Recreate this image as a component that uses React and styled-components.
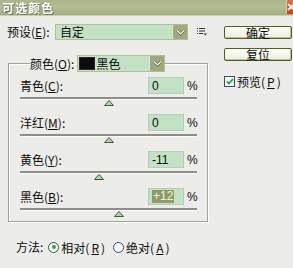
import React from "react";
import styled, { createGlobalStyle } from "styled-components";

const GlobalStyle = createGlobalStyle`
  html, body {
    margin: 0;
    padding: 0;
    background: #ecece8;
  }
  body {
    font-family: "Noto Sans CJK SC", "Liberation Sans", sans-serif;
    font-size: 12px;
    color: #0c0c0c;
  }
`;

const Window = styled.div`
  width: 293px;
  height: 268px;
  overflow: hidden;
  background: #ecece8;
  display: flex;
  flex-direction: column;
`;

const TitleBar = styled.div`
  flex: none;
  height: 15px;
  display: flex;
  align-items: center;
  justify-content: space-between;
  padding-left: 2px;
  background: linear-gradient(#aab68a, #b3be94 45%, #a2ae80);
  border-bottom: 1px solid #c9d0b4;
`;

const Title = styled.div`
  color: #fff;
  font-weight: bold;
  font-size: 12px;
  line-height: 14px;
  letter-spacing: 1px;
  text-shadow: 1px 1px 0 #6d7650, -1px 0 0 #8a9468;
`;

const CloseBox = styled.div`
  width: 6px;
  height: 14px;
  margin-top: -1px;
  background: linear-gradient(#e4714c, #c8431f);
  border-left: 1px solid #f3c0a8;
  border-top-left-radius: 2px;
  overflow: hidden;
  svg {
    display: block;
  }
`;

const Main = styled.div`
  display: flex;
  padding-top: 8px;
`;

const LeftCol = styled.div`
  width: 216px;
  flex: none;
`;

const RightCol = styled.div`
  display: flex;
  flex-direction: column;
  padding: 2px 0 0 8px;
`;

const PresetRow = styled.div`
  display: flex;
  align-items: center;
  height: 16px;
  padding-left: 7px;
`;

const FieldLabel = styled.span`
  width: ${(p) => p.$w || "auto"};
  flex: ${(p) => (p.$grow ? 1 : "none")};
  line-height: 14px;
  white-space: nowrap;
`;

const Select = styled.div`
  box-sizing: border-box;
  width: ${(p) => p.$w}px;
  height: ${(p) => p.$h}px;
  display: flex;
  align-items: center;
  background: #c3e2c5;
  border: 1px solid #b4bd94;
`;

const SelectText = styled.span`
  flex: 1;
  display: flex;
  align-items: center;
  gap: 1px;
  padding-left: ${(p) => p.$pad || 4}px;
  line-height: 14px;
  white-space: nowrap;
`;

const Swatch = styled.span`
  width: 14px;
  height: 11px;
  background: #0c0c0c;
  border: 1px solid #2a2a2a;
`;

const DropButton = styled.span`
  width: 14px;
  height: 100%;
  flex: none;
  display: flex;
  align-items: center;
  justify-content: center;
  background: #9fa87e;
  border-left: 1px solid #dfe5cf;
`;

const ListIcon = styled.svg`
  margin-left: 9px;
  flex: none;
`;

const Group = styled.fieldset`
  box-sizing: border-box;
  width: 200px;
  margin: 15px 0 0 8px;
  padding: 5px 10px 6px 11px;
  border: 1px solid #a2a29a;
  box-shadow: 1px 1px 0 #fff, inset 1px 1px 0 #fff;
  min-inline-size: 0;
`;

const Legend = styled.legend`
  margin-left: 10px;
  padding: 0;
`;

const LegendInner = styled.div`
  display: flex;
  align-items: center;
  gap: 3px;
`;

const Rows = styled.div`
  display: grid;
  row-gap: 10px;
`;

const SliderRow = styled.div`
  height: 27px;
`;

const InputLine = styled.div`
  display: flex;
  align-items: center;
  height: 17px;
`;

const NumberBox = styled.div`
  box-sizing: border-box;
  width: 36px;
  height: 17px;
  display: flex;
  align-items: center;
  padding-left: 3px;
  background: #c3e2c5;
  border: 1px solid #b2cfb3;
  font-family: "Liberation Sans", sans-serif;
  font-size: 12px;
`;

const Selected = styled.span`
  background: #8e9b62;
  color: #f4f4e8;
  line-height: 13px;
  padding: 0 1px;
`;

const Percent = styled.span`
  width: 10px;
  margin-left: 3px;
  font-family: "Liberation Sans", sans-serif;
  font-size: 12px;
`;

const Track = styled.div`
  position: relative;
  margin-top: 3px;
  height: 2px;
  background: #8e8e88;
  border-bottom: 1px solid #fbfbf8;
`;

const Thumb = styled.svg`
  position: absolute;
  top: 3px;
  margin-left: -5px;
`;

const MethodRow = styled.div`
  display: flex;
  align-items: center;
  height: 16px;
  margin-top: 17px;
  padding-left: 16px;
  gap: 5px;
`;

const RadioLabel = styled.label`
  display: flex;
  align-items: center;
  gap: 2px;
  margin-right: 3px;
  white-space: nowrap;
`;

const RadioDot = styled.span`
  box-sizing: border-box;
  width: 11px;
  height: 11px;
  border-radius: 50%;
  border: 1px solid #27507e;
  background: #fbfbf6;
  display: flex;
  align-items: center;
  justify-content: center;
  &::after {
    content: "";
    width: 4px;
    height: 4px;
    border-radius: 50%;
    background: ${(p) => (p.$on ? "#3aa53a" : "transparent")};
  }
`;

const Button = styled.div`
  box-sizing: border-box;
  width: 68px;
  height: 13px;
  margin-bottom: 9px;
  display: flex;
  align-items: center;
  justify-content: center;
  border: 1px solid #4f5f25;
  border-radius: 2px;
  background: linear-gradient(#fdfdf7, #efeee2);
  box-shadow: inset -1px -1px 0 #b8c39a;
  line-height: 12px;
  font-size: 12px;
`;

const CheckRow = styled.label`
  display: flex;
  align-items: center;
  gap: 2px;
  margin-top: 3px;
  white-space: nowrap;
`;

const CheckBox = styled.span`
  box-sizing: border-box;
  width: 11px;
  height: 11px;
  border: 1px solid #27507e;
  background: #fbfbf6;
  display: flex;
  align-items: center;
  justify-content: center;
`;

const Chevron = () => (
  <svg width="9" height="7" viewBox="0 0 9 7">
    <path d="M1 1.5 L4.5 5 L8 1.5" fill="none" stroke="#4e5634" strokeWidth="2.4" />
    <path d="M1 1.5 L4.5 5 L8 1.5" fill="none" stroke="#fff" strokeWidth="1.2" />
  </svg>
);

const sliders = [
  { label: "青色", key: "C", value: 0 },
  { label: "洋红", key: "M", value: 0 },
  { label: "黄色", key: "Y", value: -11 },
  { label: "黑色", key: "B", value: 12, selected: true },
];

const fmt = (v) => (v > 0 ? `+${v}` : `${v}`);

export default function App() {
  return (
    <Window>
      <GlobalStyle />
      <TitleBar>
        <Title>可选颜色</Title>
        <CloseBox>
          <svg width="6" height="14" viewBox="0 0 6 14">
            <path d="M1 4 L7 10 M7 4 L1 10" stroke="#fff" strokeWidth="1.6" />
          </svg>
        </CloseBox>
      </TitleBar>
      <Main>
        <LeftCol>
          <PresetRow>
            <FieldLabel $w="48px">
              预设(<u>E</u>):
            </FieldLabel>
            <Select $w={133} $h={16}>
              <SelectText>自定</SelectText>
              <DropButton>
                <Chevron />
              </DropButton>
            </Select>
            <ListIcon width="10" height="8" viewBox="0 0 10 8">
              <rect x="0" y="0" width="1" height="1" fill="#333" />
              <rect x="2" y="0" width="6" height="1" fill="#333" />
              <rect x="0" y="2.5" width="1" height="1" fill="#333" />
              <rect x="2" y="2.5" width="6" height="1" fill="#333" />
              <rect x="0" y="5" width="1" height="1" fill="#333" />
              <rect x="2" y="5" width="4" height="1" fill="#333" />
              <path d="M6.5 5.5 H10 L8.25 7.5 Z" fill="#333" />
            </ListIcon>
          </PresetRow>

          <Group>
            <Legend>
              <LegendInner>
                <FieldLabel>
                  颜色(<u>O</u>):
                </FieldLabel>
                <Select $w={88} $h={17}>
                  <SelectText $pad={1}>
                    <Swatch />
                    黑色
                  </SelectText>
                  <DropButton>
                    <Chevron />
                  </DropButton>
                </Select>
              </LegendInner>
            </Legend>
            <Rows>
              {sliders.map((s) => (
                <SliderRow key={s.key}>
                  <InputLine>
                    <FieldLabel $grow>
                      {s.label}(<u>{s.key}</u>):
                    </FieldLabel>
                    <NumberBox>
                      {s.selected ? <Selected>{fmt(s.value)}</Selected> : fmt(s.value)}
                    </NumberBox>
                    <Percent>%</Percent>
                  </InputLine>
                  <Track>
                    <Thumb
                      width="10"
                      height="6"
                      viewBox="0 0 10 6"
                      style={{ left: `${50 + s.value / 2}%` }}
                    >
                      <path d="M5 0.5 L9.5 5.5 H0.5 Z" fill="#a8dba8" stroke="#3f5a3f" strokeWidth="1" />
                    </Thumb>
                  </Track>
                </SliderRow>
              ))}
            </Rows>
          </Group>

          <MethodRow>
            <FieldLabel>方法:</FieldLabel>
            <RadioLabel>
              <RadioDot $on />
              相对(<u>R</u>)
            </RadioLabel>
            <RadioLabel>
              <RadioDot />
              绝对(<u>A</u>)
            </RadioLabel>
          </MethodRow>
        </LeftCol>

        <RightCol>
          <Button>确定</Button>
          <Button>复位</Button>
          <CheckRow>
            <CheckBox>
              <svg width="8" height="7" viewBox="0 0 8 7">
                <path d="M1 3.5 L3 5.5 L7 1" fill="none" stroke="#2f9e2f" strokeWidth="1.8" />
              </svg>
            </CheckBox>
            预览(<u>P</u>)
          </CheckRow>
        </RightCol>
      </Main>
    </Window>
  );
}
